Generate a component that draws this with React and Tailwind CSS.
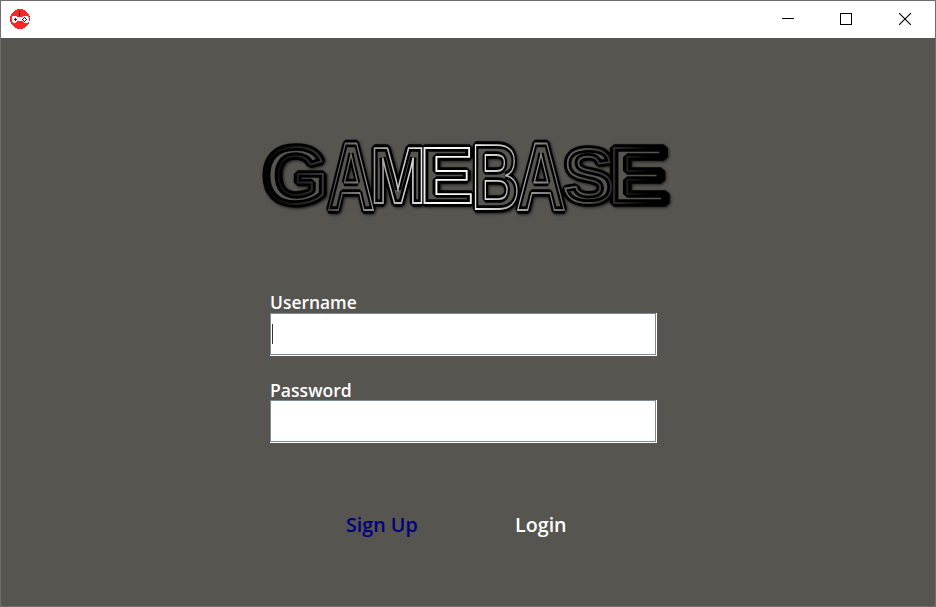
const letters = [
  { c: "G", x: 263, y: 203, size: 79, w: 65 },
  { c: "A", x: 327, y: 210, size: 96, w: 48 },
  { c: "M", x: 370, y: 203, size: 79, w: 56 },
  { c: "E", x: 419, y: 203, size: 79, w: 55 },
  { c: "B", x: 471, y: 209, size: 92, w: 49 },
  { c: "A", x: 516, y: 210, size: 96, w: 50 },
  { c: "S", x: 563, y: 202, size: 76, w: 51 },
  { c: "E", x: 608, y: 203, size: 79, w: 61 },
];

function Logo() {
  return (
    <svg width="420" height="90" viewBox="256 132 420 90" className="block" aria-label="GAMEBASE">
      <defs>
        <linearGradient id="shine" gradientUnits="userSpaceOnUse" x1="262" x2="670" y1="0" y2="0">
          <stop offset="0" stopColor="#000" />
          <stop offset="0.14" stopColor="#333" />
          <stop offset="0.25" stopColor="#888" />
          <stop offset="0.43" stopColor="#fff" />
          <stop offset="0.52" stopColor="#eee" />
          <stop offset="0.68" stopColor="#888" />
          <stop offset="0.84" stopColor="#383838" />
          <stop offset="0.95" stopColor="#000" />
        </linearGradient>
        <filter id="shadow" x="-5%" y="-15%" width="110%" height="135%">
          <feDropShadow dx="1" dy="1" stdDeviation="1.8" floodColor="#000" floodOpacity="0.7" />
        </filter>
        <text id="wordmark" fontFamily="'Liberation Sans', Arial, sans-serif" fontWeight="700">
          {letters.map((l, i) => (
            <tspan key={i} x={l.x} y={l.y} fontSize={l.size} textLength={l.w} lengthAdjust="spacingAndGlyphs">{l.c}</tspan>
          ))}
        </text>
      </defs>
      <use href="#wordmark" fill="#565550" stroke="#000" strokeWidth="7.5" strokeLinejoin="bevel" filter="url(#shadow)" />
      <use href="#wordmark" fill="none" stroke="url(#shine)" strokeWidth="1.8" strokeLinejoin="miter" />
    </svg>
  );
}

function Field({ label, type, focused, labelClass }) {
  return (
    <label className="block w-[387px]">
      <span className={`block h-[22px] font-semibold text-white ${labelClass}`}>{label}</span>
      <span className="block h-[43px] border-r border-b border-white">
        <span className="flex h-[42px] items-center border border-[#7a8a99] bg-white pl-px">
          {focused && <span className="h-5 w-px bg-[#333]" />}
          <input type={type} className="w-full bg-transparent outline-none" />
        </span>
      </span>
    </label>
  );
}

export default function App() {
  return (
    <div className="flex h-[607px] w-[936px] flex-col overflow-hidden border border-[#6e6e6e] bg-[#565550] font-['Open_Sans','Noto_Sans',sans-serif]">
      <header className="flex h-[37px] shrink-0 items-start justify-between bg-white pl-[9px]">
        <svg width="20" height="20" viewBox="0 0 20 20" className="mt-2" shapeRendering="crispEdges">
          <circle cx="10" cy="10" r="10" fill="#ff2626" />
          <path d="M2 7h5v1h6V7h5v1h1v5h-1v1h-4v-1h-1v-1H7v1H6v1H3v-1H2z" fill="#eee" />
          <path d="M9 2h1v5H9zM5 9h1v3H5zM4 10h3v1H4zM14 8h1v1h-1zM13 9h1v1h-1zM15 9h1v1h-1zM12 10h1v1h-1zM16 10h1v1h-1zM13 11h1v1h-1zM15 11h1v1h-1zM14 12h1v1h-1z" fill="#222" />
        </svg>
        <div className="flex">
          <button className="grid h-9 w-[58px] place-items-center" aria-label="Minimize">
            <svg width="12" height="12" shapeRendering="crispEdges"><path d="M0 5.5h12" stroke="#000" /></svg>
          </button>
          <button className="grid h-9 w-[58px] place-items-center" aria-label="Maximize">
            <svg width="12" height="12" shapeRendering="crispEdges"><path d="M.5.5h11v11H.5z" fill="none" stroke="#000" /></svg>
          </button>
          <button className="grid h-9 w-[60px] place-items-center" aria-label="Close">
            <svg width="12" height="12"><path d="M0 0l12 12M12 0L0 12" stroke="#000" strokeWidth="1.1" /></svg>
          </button>
        </div>
      </header>
      <main className="flex flex-col pt-[94px]">
        <div className="ml-[255px]">
          <Logo />
        </div>
        <div className="mt-[69px] ml-[269px] flex flex-col gap-[22px]">
          <Field label="Username" type="text" focused labelClass="text-[17.4px] leading-[22px]" />
          <Field label="Password" type="password" labelClass="text-[17.6px] leading-6" />
        </div>
        <div className="mt-[68px] ml-[345px] flex h-7 items-center text-[19.7px] leading-7 font-semibold">
          <button className="w-[169px] text-left text-[#000080]">Sign Up</button>
          <button className="text-left text-white">Login</button>
        </div>
      </main>
    </div>
  );
}
